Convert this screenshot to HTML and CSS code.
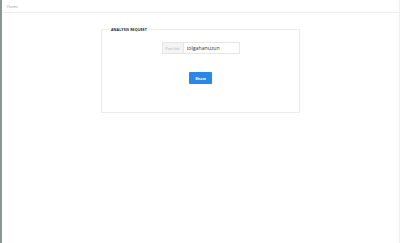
FILE: index.html
```html
<!DOCTYPE html>
<html lang="en">
<head>
  <meta charset="UTF-8" />
  <meta name="viewport" content="width=device-width, initial-scale=1.0" />
  <title>Analysis Request</title>
  <link rel="stylesheet" href="styles.css">
</head>
<body>
  <div class="page">
    <nav class="topbar">
      <a href="#">Home</a>
    </nav>
    <main class="content">
      <fieldset class="request">
        <legend>ANALYSIS REQUEST</legend>
        <div class="input-group">
          <span class="addon">Post link</span>
          <input type="text" value="tolgahanuzun">
        </div>
        <button class="show-btn">Show</button>
      </fieldset>
    </main>
  </div>
</body>
</html>
```

FILE: styles.css
```css
html, body { margin: 0; height: 100%; background: #fff; }
body { font-family: "Open Sans", "Liberation Sans", Arial, sans-serif; color: #333; }
.page { height: 100%; border-left: 2px solid #8a9696; border-right: 1px solid #eef0f0; box-sizing: border-box; }
.topbar { height: 12px; border-bottom: 1px solid #eceeee; display: flex; align-items: center; padding-left: 5px; }
.topbar a { color: #9a9a9a; font-size: 4px; text-decoration: none; }
.content { display: flex; justify-content: center; padding-top: 14px; }
.request { width: 199px; height: 86px; box-sizing: border-box; margin: 0; padding: 0; border: 1px solid #ebebeb; display: flex; flex-direction: column; align-items: center; }
.request legend { font-size: 3.6px; font-weight: bold; color: #222; margin-left: 7px; padding: 0 2px; letter-spacing: 0.1px; }
.input-group { display: flex; margin-top: 10px; height: 12px; }
.addon { width: 22px; box-sizing: border-box; background: #f4f4f4; border: 1px solid #e6e6e6; color: #aaa; font-size: 3.5px; display: flex; align-items: center; justify-content: center; }
.input-group input { width: 56px; box-sizing: border-box; border: 1px solid #e6e6e6; border-left: none; font-family: inherit; font-size: 5.2px; color: #333; padding: 0 3px; margin: 0; outline: none; }
.show-btn { margin-top: 18px; width: 23px; height: 12px; padding: 0; background: #2a87e6; color: #fff; border: none; border-radius: 1px; font-family: inherit; font-size: 4px; font-weight: bold; }
```
